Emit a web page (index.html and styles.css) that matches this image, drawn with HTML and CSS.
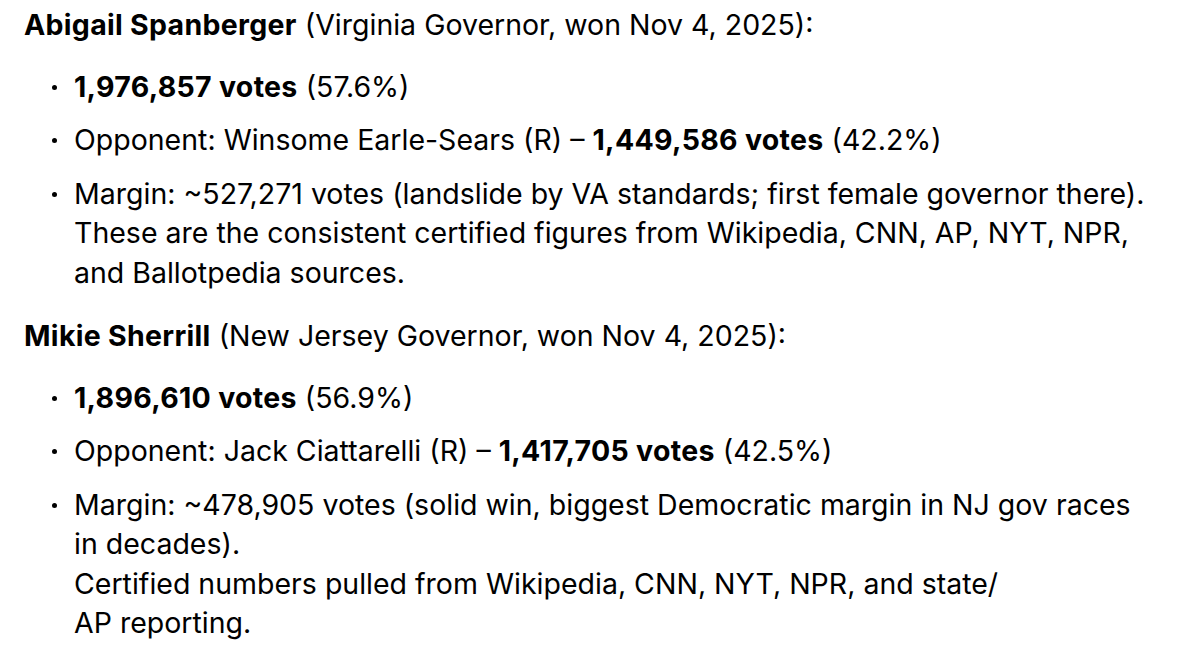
FILE: index.html
```html
<!DOCTYPE html>
<html lang="en">
<head>
<meta charset="utf-8">
<title>Governor results</title>
<link rel="stylesheet" href="styles.css">
</head>
<body>
<main class="answer">
  <p class="lead"><strong>Abigail Spanberger</strong> (Virginia Governor, won Nov 4, 2025):</p>
  <ul class="facts">
    <li><strong>1,976,857 votes</strong> (57.6%)</li>
    <li>Opponent: Winsome Earle-Sears (R) – <strong>1,449,586 votes</strong> (42.2%)</li>
    <li>Margin: ~527,271 votes (landslide by VA standards; first female governor there).<br>These are the consistent certified figures from Wikipedia, CNN, AP, NYT, NPR,<br>and Ballotpedia sources.</li>
  </ul>
  <p class="lead"><strong>Mikie Sherrill</strong> (New Jersey Governor, won Nov 4, 2025):</p>
  <ul class="facts">
    <li><strong>1,896,610 votes</strong> (56.9%)</li>
    <li>Opponent: Jack Ciattarelli (R) – <strong>1,417,705 votes</strong> (42.5%)</li>
    <li>Margin: ~478,905 votes (solid win, biggest Democratic margin in NJ gov races<br>in decades).<br>Certified numbers pulled from Wikipedia, CNN, NYT, NPR, and state/<br>AP reporting.</li>
  </ul>
</main>
</body>
</html>
```
FILE: styles.css
```css
html, body {
  margin: 0;
  padding: 0;
  background: #ffffff;
}
body {
  font-family: Inter, "Noto Sans", "Liberation Sans", sans-serif;
  font-size: 28.5px;
  line-height: 39.5px;
  color: #000000;
}
.answer {
  padding: 5px 0 0 24px;
}
.lead {
  margin: 0;
  white-space: nowrap;
}
strong {
  font-weight: 650;
  letter-spacing: 0.3px;
}
.facts {
  margin: 22px 0 24px 0;
  padding: 0 0 0 50px;
  list-style: none;
}
.facts li {
  position: relative;
  margin: 0 0 14px 0;
  white-space: nowrap;
}
.facts li:last-child {
  margin-bottom: 0;
}
.facts li::before {
  content: "";
  position: absolute;
  left: -22px;
  top: 18px;
  width: 5px;
  height: 5px;
  border-radius: 50%;
  background: #000;
}
```
